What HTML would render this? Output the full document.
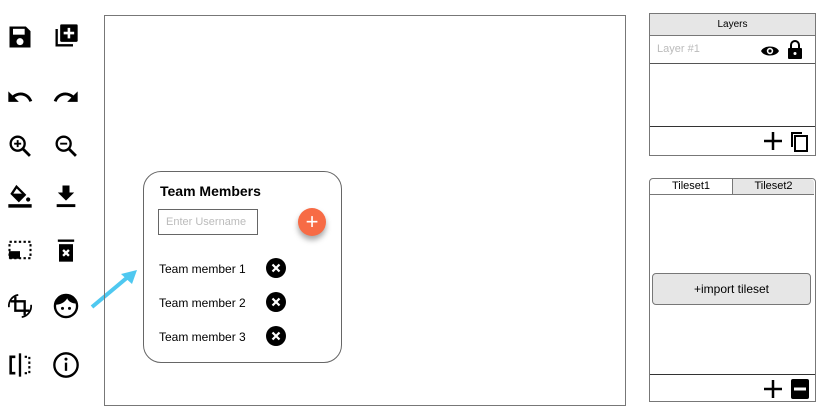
<!DOCTYPE html>
<html><head><style>
body{margin:0;width:827px;height:410px;background:#fff;position:relative;font-family:"Liberation Sans",sans-serif;overflow:hidden}
.a{position:absolute}
svg.i{position:absolute;width:28px;height:28px}
</style></head><body>
<!-- icons -->
<svg class="i" style="left:6px;top:23px" viewBox="0 0 24 24"><path d="M3 3h14l4 4v14H3z" fill="#000"/><rect x="6" y="5" width="10" height="5" fill="#fff"/><circle cx="12" cy="16" r="3" fill="#fff"/></svg>
<svg class="i" style="left:52px;top:22px" viewBox="0 0 24 24"><path d="M3 6h2v13h13v2H3z" fill="#000"/><rect x="7" y="2" width="15" height="15" rx="1" fill="#000"/><path d="M14.5 5v9M10 9.5h9" stroke="#fff" stroke-width="2.2"/></svg>
<svg class="i" style="left:6px;top:82px" viewBox="0 0 24 24"><path d="M12.5 9c-2.6 0-5 1-6.9 2.6L2 8v9h9l-3.6-3.6c1.4-1.2 3.2-1.9 5.1-1.9 3.5 0 6.5 2.3 7.6 5.5l2.4-.8C21 11.9 17.1 9 12.5 9z" fill="#000"/></svg>
<svg class="i" style="left:52px;top:82px" viewBox="0 0 24 24"><path d="M11.5 9c2.6 0 5 1 6.9 2.6L22 8v9h-9l3.6-3.6c-1.4-1.2-3.2-1.9-5.1-1.9-3.5 0-6.5 2.3-7.6 5.5L1.5 16.2C3 11.9 6.9 9 11.5 9z" fill="#000"/></svg>
<svg class="i" style="left:6px;top:132px" viewBox="0 0 24 24"><circle cx="10" cy="10" r="6" fill="none" stroke="#000" stroke-width="2"/><path d="M14.5 14.5l6 6" stroke="#000" stroke-width="2.4"/><path d="M10 7v6M7 10h6" stroke="#000" stroke-width="1.6"/></svg>
<svg class="i" style="left:52px;top:132px" viewBox="0 0 24 24"><circle cx="10" cy="10" r="6" fill="none" stroke="#000" stroke-width="2"/><path d="M14.5 14.5l6 6" stroke="#000" stroke-width="2.4"/><path d="M7 10h6" stroke="#000" stroke-width="1.6"/></svg>
<svg class="i" style="left:6px;top:182px" viewBox="0 0 24 24"><path d="M9 4l7 7-5 5-6-6z" fill="none" stroke="#000" stroke-width="2"/><path d="M5 10h11l-5 5z" fill="#000"/><circle cx="19" cy="15" r="1.8" fill="#000"/><rect x="2" y="19" width="20" height="3" fill="#000"/></svg>
<svg class="i" style="left:52px;top:182px" viewBox="0 0 24 24"><path d="M9 3h6v6h4l-7 7-7-7h4z" fill="#000"/><rect x="4" y="19" width="16" height="2.5" fill="#000"/></svg>
<svg class="i" style="left:6px;top:236px" viewBox="0 0 24 24"><rect x="3" y="5" width="18" height="14" fill="none" stroke="#000" stroke-width="1.8" stroke-dasharray="2 2"/><rect x="2.5" y="13" width="9.5" height="6.5" fill="#000"/></svg>
<svg class="i" style="left:52px;top:236px" viewBox="0 0 24 24"><rect x="5" y="3" width="14" height="2" fill="#000"/><path d="M6 7h12v15H6z" fill="#000"/><path d="M9.5 12l5 5M14.5 12l-5 5" stroke="#fff" stroke-width="2"/></svg>
<svg class="i" style="left:6px;top:292px" viewBox="0 0 24 24"><path d="M8 4v12h12M4 8h12v12" fill="none" stroke="#000" stroke-width="2"/><path d="M2.5 13a9.5 9.5 0 0 1 8-10.5M21.5 11a9.5 9.5 0 0 1-8 10.5" fill="none" stroke="#000" stroke-width="1.5"/></svg>
<svg class="i" style="left:52px;top:292px" viewBox="0 0 24 24"><circle cx="12" cy="12" r="9.5" fill="none" stroke="#000" stroke-width="2"/><path d="M2.5 11C2.5 6 7 2.5 12 2.5S21.5 6 21.5 10C17 10 14 8 13 5.5 11 9 7 11 2.5 11z" fill="#000"/><circle cx="9" cy="14" r="1.3"/><circle cx="15" cy="14" r="1.3"/></svg>
<svg class="i" style="left:6px;top:351px" viewBox="0 0 24 24"><path d="M8 5H4v14h4" fill="none" stroke="#000" stroke-width="2.2"/><path d="M12 2v20" stroke="#000" stroke-width="2"/><path d="M16 5h4v14h-4" fill="none" stroke="#000" stroke-width="1.8" stroke-dasharray="2 2"/></svg>
<svg class="i" style="left:52px;top:351px" viewBox="0 0 24 24"><circle cx="12" cy="12" r="10" fill="none" stroke="#000" stroke-width="2"/><rect x="11" y="10" width="2" height="7" fill="#000"/><circle cx="12" cy="7" r="1.3"/></svg>
<!-- arrow -->
<svg class="a" style="left:85px;top:262px" width="60" height="55"><path d="M7 45L44 14" stroke="#4fc8f0" stroke-width="4"/><path d="M52 8L36 12L47 22z" fill="#4fc8f0"/></svg>
<!-- canvas -->
<div class="a" style="left:104px;top:15px;width:520px;height:389px;border:1px solid #777"></div>
<!-- card -->
<div class="a" style="left:143px;top:171px;width:197px;height:190px;border:1px solid #666;border-radius:18px;background:#fff"></div>
<div class="a" style="left:160px;top:183px;font-size:14px;font-weight:bold">Team Members</div>
<div class="a" style="left:158px;top:209px;height:26px;border:1px solid #666;box-sizing:border-box;width:100px;font-size:11px;color:#bbb;line-height:24px;padding-left:7px">Enter Username</div>
<div class="a" style="left:298px;top:208px;width:28px;height:28px;border-radius:50%;background:#f76b45;box-shadow:0 4px 6px rgba(0,0,0,.35);color:#fff;font-size:22px;text-align:center;line-height:27px">+</div>
<div class="a" style="left:159px;top:262px;font-size:12px">Team member 1</div>
<div class="a" style="left:159px;top:296px;font-size:12px">Team member 2</div>
<div class="a" style="left:159px;top:330px;font-size:12px">Team member 3</div>
<svg class="a" style="left:266px;top:258px" width="20" height="88"><g stroke="#fff" stroke-width="2.2"><circle cx="10" cy="10" r="10" fill="#000" stroke="none"/><path d="M6.5 6.5l7 7M13.5 6.5l-7 7"/><circle cx="10" cy="44" r="10" fill="#000" stroke="none"/><path d="M6.5 40.5l7 7M13.5 40.5l-7 7"/><circle cx="10" cy="78" r="10" fill="#000" stroke="none"/><path d="M6.5 74.5l7 7M13.5 74.5l-7 7"/></g></svg>
<!-- layers -->
<div class="a" style="left:649px;top:13px;width:165px;height:141px;border:1px solid #777"></div>
<div class="a" style="left:650px;top:14px;width:165px;height:21px;background:#e6e6e6;border-bottom:1px solid #777;font-size:10px;text-align:center;line-height:21px">Layers</div>
<div class="a" style="left:657px;top:43px;font-size:11px;color:#bbb">Layer #1</div>
<svg class="a" style="left:760px;top:40px" width="46" height="20"><path d="M1 11C4 5 16 5 19 11C16 17 4 17 1 11z" fill="#000"/><circle cx="10" cy="11" r="3.2" fill="#fff"/><circle cx="10" cy="11" r="1.6" fill="#000"/><path d="M31 8V5a4 4 0 0 1 8 0v3" fill="none" stroke="#000" stroke-width="2"/><rect x="28" y="8" width="14" height="11" rx="1" fill="#000"/><circle cx="35" cy="13.5" r="1.5" fill="#fff"/></svg>
<div class="a" style="left:650px;top:63px;width:165px;height:1px;background:#555"></div>
<div class="a" style="left:650px;top:126px;width:165px;height:1px;background:#333"></div>
<svg class="a" style="left:763px;top:130px" width="48" height="24"><path d="M10 2v18M1 11h18" stroke="#000" stroke-width="2.5"/><path d="M29 17V3h10" fill="none" stroke="#000" stroke-width="2"/><rect x="32" y="6" width="12" height="15" fill="none" stroke="#000" stroke-width="2"/></svg>
<!-- tileset -->
<div class="a" style="left:649px;top:178px;width:165px;height:222px;border:1px solid #777;border-radius:4px 4px 0 0"></div>
<div class="a" style="left:650px;top:179px;width:82px;height:15px;font-size:11px;text-align:center;line-height:15px;border-right:1px solid #777;border-bottom:1px solid #777">Tileset1</div>
<div class="a" style="left:733px;top:179px;width:81px;height:15px;background:#e6e6e6;font-size:11px;text-align:center;line-height:15px;border-bottom:1px solid #777;border-radius:0 4px 0 0">Tileset2</div>
<div class="a" style="left:652px;top:273px;width:157px;height:30px;background:#e6e6e6;border:1px solid #777;border-radius:4px;font-size:12px;text-align:center;line-height:30px">+import tileset</div>
<div class="a" style="left:650px;top:374px;width:165px;height:1px;background:#333"></div>
<svg class="a" style="left:763px;top:377px" width="48" height="24"><path d="M10 3v18M1 12h18" stroke="#000" stroke-width="2.5"/><rect x="28" y="2" width="18" height="20" rx="2" fill="#000"/><rect x="31" y="10.5" width="12" height="3" fill="#fff"/></svg>
</body></html>
